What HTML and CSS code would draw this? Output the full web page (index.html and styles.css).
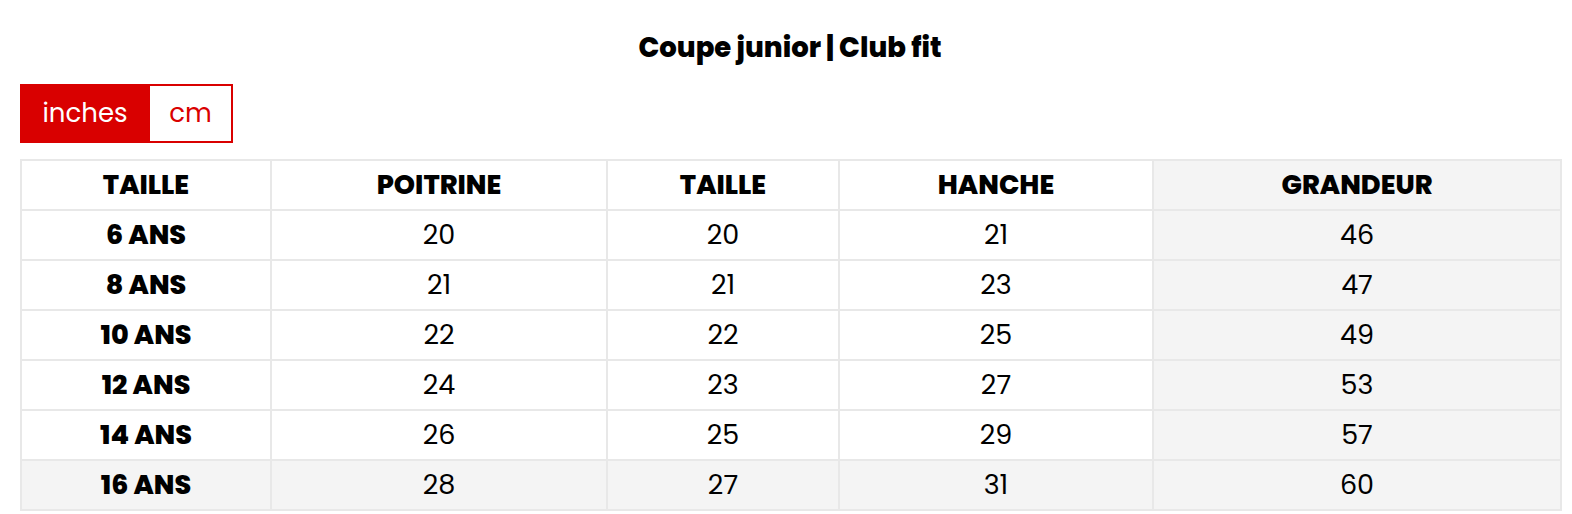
FILE: index.html
```html
<!DOCTYPE html>
<html lang="fr">
<head>
<meta charset="utf-8">
<title>Coupe junior | Club fit</title>
<link rel="stylesheet" href="styles.css">
</head>
<body>
<div class="chart">
  <h2 class="chart-title">Coupe junior | Club fit</h2>
  <div class="units">
    <button class="unit unit-active">inches</button>
    <button class="unit">cm</button>
  </div>
  <table class="sizes">
    <colgroup>
      <col class="c1"><col class="c2"><col class="c3"><col class="c4"><col class="c5">
    </colgroup>
    <thead>
      <tr><th>TAILLE</th><th>POITRINE</th><th>TAILLE</th><th>HANCHE</th><th class="hl">GRANDEUR</th></tr>
    </thead>
    <tbody>
      <tr><th>6 ANS</th><td>20</td><td>20</td><td>21</td><td class="hl">46</td></tr>
      <tr><th>8 ANS</th><td>21</td><td>21</td><td>23</td><td class="hl">47</td></tr>
      <tr><th>10 ANS</th><td>22</td><td>22</td><td>25</td><td class="hl">49</td></tr>
      <tr><th>12 ANS</th><td>24</td><td>23</td><td>27</td><td class="hl">53</td></tr>
      <tr><th>14 ANS</th><td>26</td><td>25</td><td>29</td><td class="hl">57</td></tr>
      <tr class="last"><th>16 ANS</th><td>28</td><td>27</td><td>31</td><td class="hl">60</td></tr>
    </tbody>
  </table>
</div>
</body>
</html>
```

FILE: styles.css
```css
html, body {
  margin: 0;
  padding: 0;
  background: #ffffff;
}
body {
  font-family: "Poppins", "Inter", "Liberation Sans", sans-serif;
  color: #000;
}
.chart {
  padding: 31px 12px 0 20px;
  display: flex;
  flex-direction: column;
  align-items: flex-start;
}
.chart-title {
  align-self: stretch;
  margin: 0 0 19px 0;
  text-align: center;
  font-size: 27.5px;
  line-height: 34px;
  font-weight: 800;
}
.units {
  display: flex;
  height: 59px;
  margin-bottom: 16px;
}
.unit {
  font-family: inherit;
  font-size: 26px;
  font-weight: 400;
  border: 2px solid #d90000;
  background: #fff;
  color: #d90000;
  padding: 0;
  margin: 0;
  width: 85px;
  cursor: pointer;
}
.unit-active {
  width: 128px;
  background: #d90000;
  color: #fff;
  border-right: none;
}
.sizes {
  width: 1540px;
  border-collapse: collapse;
  table-layout: fixed;
}
.c1 { width: 250px; }
.c2 { width: 336px; }
.c3 { width: 232px; }
.c4 { width: 314px; }
.c5 { width: 408px; }
.sizes th, .sizes td {
  border: 2px solid #e8e8e8;
  height: 48px;
  padding: 0;
  text-align: center;
  font-size: 27px;
  line-height: 34px;
}
.sizes th {
  font-weight: 800;
}
.sizes td {
  font-weight: 400;
}
.sizes .hl,
.sizes .last th,
.sizes .last td {
  background: #f4f4f4;
}
```
